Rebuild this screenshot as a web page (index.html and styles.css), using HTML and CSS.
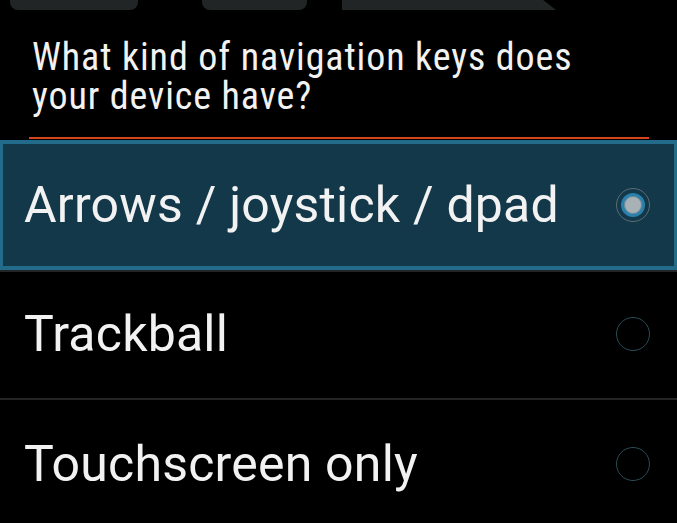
FILE: index.html
```html
<!DOCTYPE html>
<html lang="en">
<head>
    <meta charset="UTF-8">
    <meta name="viewport" content="width=device-width, initial-scale=1.0">
    <title>Navigation keys</title>
    <link rel="stylesheet" href="styles.css">
</head>
<body>
    <div class="top-strip">
        <span class="tab tab-one"></span>
        <span class="tab tab-two"></span>
        <span class="tab tab-three"></span>
    </div>

    <h1 class="title">What kind of navigation keys does your device have?</h1>
    <div class="title-rule"></div>

    <ul class="choices">
        <li class="choice selected">
            <span class="label">Arrows / joystick / dpad</span>
            <span class="radio checked"><span class="dot"></span></span>
        </li>
        <li class="choice">
            <span class="label">Trackball</span>
            <span class="radio"></span>
        </li>
        <li class="choice">
            <span class="label">Touchscreen only</span>
            <span class="radio"></span>
        </li>
    </ul>
</body>
</html>
```

FILE: styles.css
```css
body {
    margin: 0;
    background-color: #000;
    color: #f2f2f2;
    font-family: Roboto, "Noto Sans", sans-serif;
    overflow: hidden;
}
.top-strip {
    display: flex;
    height: 10px;
}
.tab {
    display: block;
    height: 10px;
    background-color: #212526;
}
.tab-one {
    margin-left: 10px;
    width: 128px;
    border-radius: 0 0 8px 8px;
}
.tab-two {
    margin-left: 64px;
    width: 105px;
    border-radius: 0 0 8px 8px;
}
.tab-three {
    margin-left: 35px;
    width: 214px;
    clip-path: polygon(0 0, 94% 0, 100% 100%, 0 100%);
}
.title {
    margin: 0;
    padding: 28px 45px 0 32px;
    font-family: "Roboto Condensed", Roboto, sans-serif;
    font-stretch: condensed;
    font-size: 38px;
    font-weight: normal;
    line-height: 39px;
    letter-spacing: 0.9px;
    height: 75px;
}
.title-rule {
    margin: 24px 28px 0 29px;
    height: 2px;
    background-color: #d4441f;
}
.choices {
    list-style: none;
    margin: 0;
    padding: 0;
}
.choice {
    display: flex;
    align-items: center;
    justify-content: space-between;
    height: 130px;
    padding: 0 27px 0 24px;
    border-bottom: 2px solid #222425;
    box-sizing: border-box;
}
.choice.selected {
    margin-top: 1px;
    background-color: #12384a;
    border: 3px solid #226b8a;
    border-top-width: 4px;
    border-bottom-width: 4px;
    box-shadow: 0 2px 0 #222425;
    padding: 0 24px 0 21px;
}
.label {
    font-size: 50px;
    letter-spacing: 0.2px;
}
.radio {
    width: 32px;
    height: 32px;
    border: 1px solid #2a4c58;
    border-radius: 50%;
    display: flex;
    align-items: center;
    justify-content: center;
}
.radio.checked {
    border-color: #5d6d73;
}
.dot {
    width: 18px;
    height: 18px;
    border-radius: 50%;
    background-color: #a7b1b6;
    border: 3px solid #2a80aa;
    box-shadow: inset 0 0 0 1px #6f8792;
}
```
